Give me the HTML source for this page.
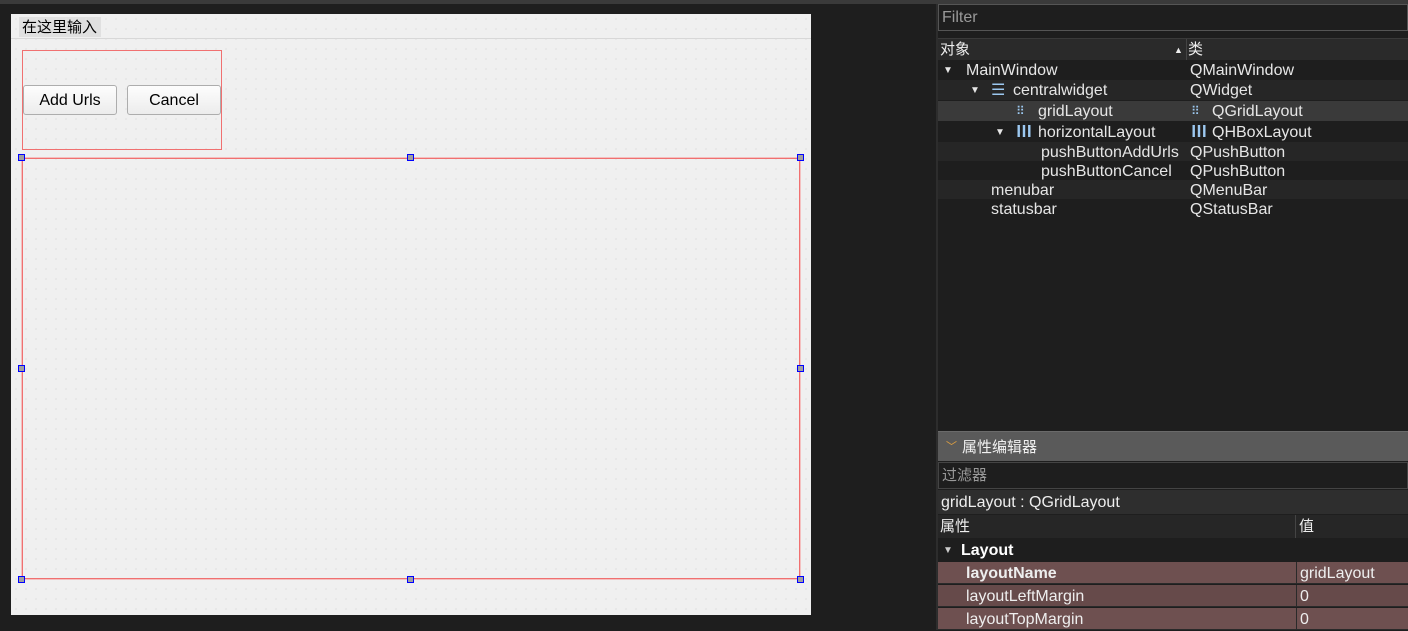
<!DOCTYPE html><html><head><style>
*{margin:0;padding:0;box-sizing:border-box}
body{width:1408px;height:630px;background:#1e1e1e;position:relative;overflow:hidden;font-family:"Liberation Sans","Noto Sans CJK SC",sans-serif;font-size:14px}
.a{position:absolute}
.form{left:11px;top:14px;width:800px;height:601px;background:#f0f0f0;background-image:radial-gradient(#e2e2e2 0.7px,transparent 1px);background-size:10px 10px}
.btn{position:absolute;top:85px;height:30px;border:1px solid #adadad;border-radius:3px;background:linear-gradient(#fdfdfd,#ececec);color:#000;font-size:16px;text-align:center;line-height:29px}
.h{position:absolute;width:7px;height:7px;border:1px solid #00f;background:#a0a0a0}
.r{position:absolute;left:938px;width:470px;height:20px;color:#e6e6e6;font-size:16px;line-height:21px}
.r span{position:absolute}
.p{position:absolute;left:938px;width:470px;height:22px;background:#6e5050;color:#eee;font-size:16px;line-height:23px;border-bottom:1px solid #2a2a2a}
</style></head><body>
<div class="a" style="left:0;top:0;width:1408px;height:4px;background:#3a3a3a"></div>
<div class="a form"></div>
<div class="a" style="left:19px;top:17px;width:82px;height:20px;background:#e0e0e0;font-size:15px;line-height:21px;padding-left:3px">在这里输入</div>
<div class="a" style="left:11px;top:38px;width:800px;height:1px;background:#d8d8d8"></div>
<div class="a" style="left:22px;top:50px;width:200px;height:100px;border:1px solid #f07070"></div>
<div class="btn" style="left:23px;width:94px">Add Urls</div>
<div class="btn" style="left:127px;width:94px">Cancel</div>
<div class="a" style="left:21px;top:157px;width:780px;height:423px;border:2px solid #f4c0c0"></div>
<div class="a" style="left:22px;top:158px;width:778px;height:421px;border:1px solid #f07070"></div>
<div class="h" style="left:18px;top:154px"></div><div class="h" style="left:407px;top:154px"></div><div class="h" style="left:797px;top:154px"></div>
<div class="h" style="left:18px;top:365px"></div><div class="h" style="left:797px;top:365px"></div>
<div class="h" style="left:18px;top:576px"></div><div class="h" style="left:407px;top:576px"></div><div class="h" style="left:797px;top:576px"></div>

<div class="a" style="left:936px;top:4px;width:2px;height:626px;background:#2d2d2d"></div>
<div class="a" style="left:938px;top:4px;width:470px;height:27px;border:1px solid #555;background:#1e1e1e;color:#999;font-size:16px;line-height:26px;padding-left:3px">Filter</div>
<div class="a" style="left:938px;top:38px;width:470px;height:22px;background:#2a2a2a;border-top:1px solid #3a3a3a;color:#eee;font-size:15px;line-height:22px"><span class="a" style="left:2px">对象</span><span class="a" style="left:236px;font-size:9px">▲</span><span class="a" style="left:248px;top:0;width:1px;height:22px;background:#444"></span><span class="a" style="left:250px">类</span></div>
<div class="r" style="top:60px;background:#1e1e1e"><span style="left:5px;font-size:10px">▼</span><span style="left:28px">MainWindow</span><span style="left:252px">QMainWindow</span></div>
<div class="r" style="top:80px;background:#262626"><span style="left:32px;font-size:10px">▼</span><span style="left:53px;color:#9cc8f0">☰</span><span style="left:75px">centralwidget</span><span style="left:252px">QWidget</span></div>
<div class="r" style="top:101px;background:#3a3a3a"><span style="left:78px;color:#9cc8f0;font-size:12px">⠿</span><span style="left:100px">gridLayout</span><span style="left:253px;color:#9cc8f0;font-size:12px">⠿</span><span style="left:274px">QGridLayout</span></div>
<div class="r" style="top:122px;background:#1e1e1e"><span style="left:57px;font-size:10px">▼</span><span style="left:78px;color:#9cc8f0;font-weight:bold">Ⅲ</span><span style="left:100px">horizontalLayout</span><span style="left:253px;color:#9cc8f0;font-weight:bold">Ⅲ</span><span style="left:274px">QHBoxLayout</span></div>
<div class="r" style="top:142px;background:#262626;height:19px"><span style="left:103px">pushButtonAddUrls</span><span style="left:252px">QPushButton</span></div>
<div class="r" style="top:161px;background:#1e1e1e;height:19px"><span style="left:103px">pushButtonCancel</span><span style="left:252px">QPushButton</span></div>
<div class="r" style="top:180px;background:#262626;height:19px"><span style="left:53px">menubar</span><span style="left:252px">QMenuBar</span></div>
<div class="r" style="top:199px;background:#1e1e1e;height:19px"><span style="left:53px">statusbar</span><span style="left:252px">QStatusBar</span></div>

<div class="a" style="left:938px;top:431px;width:470px;height:30px;background:#5a5a5a;border-top:1px solid #6a6a6a;color:#f0f0f0;font-size:15px;line-height:31px"><span class="a" style="left:8px;color:#e0a040;font-size:11px">﹀</span><span class="a" style="left:24px">属性编辑器</span></div>
<div class="a" style="left:938px;top:462px;width:470px;height:27px;border:1px solid #444;background:#1e1e1e;color:#999;font-size:15px;line-height:26px;padding-left:3px">过滤器</div>
<div class="a" style="left:938px;top:490px;width:470px;height:24px;background:#2e2e2e;color:#eee;font-size:16px;line-height:25px;padding-left:3px">gridLayout : QGridLayout</div>
<div class="a" style="left:938px;top:515px;width:470px;height:23px;background:#262626;color:#eee;font-size:15px;line-height:23px"><span class="a" style="left:2px">属性</span><span class="a" style="left:357px;top:0;width:1px;height:23px;background:#444"></span><span class="a" style="left:361px">值</span></div>
<div class="a" style="left:938px;top:538px;width:470px;height:24px;background:#1e1e1e;color:#fff;font-size:16px;font-weight:bold;line-height:25px"><span class="a" style="left:5px;font-size:10px;color:#ccc">▼</span><span class="a" style="left:23px">Layout</span></div>
<div class="p" style="top:562px"><span class="a" style="left:28px;font-weight:bold">layoutName</span><span class="a" style="left:358px;top:0;width:1px;height:22px;background:#2a2a2a"></span><span class="a" style="left:362px">gridLayout</span></div>
<div class="p" style="top:585px;background:#664a4a"><span class="a" style="left:28px">layoutLeftMargin</span><span class="a" style="left:358px;top:0;width:1px;height:22px;background:#2a2a2a"></span><span class="a" style="left:362px">0</span></div>
<div class="p" style="top:608px"><span class="a" style="left:28px">layoutTopMargin</span><span class="a" style="left:358px;top:0;width:1px;height:22px;background:#2a2a2a"></span><span class="a" style="left:362px">0</span></div>
</body></html>
